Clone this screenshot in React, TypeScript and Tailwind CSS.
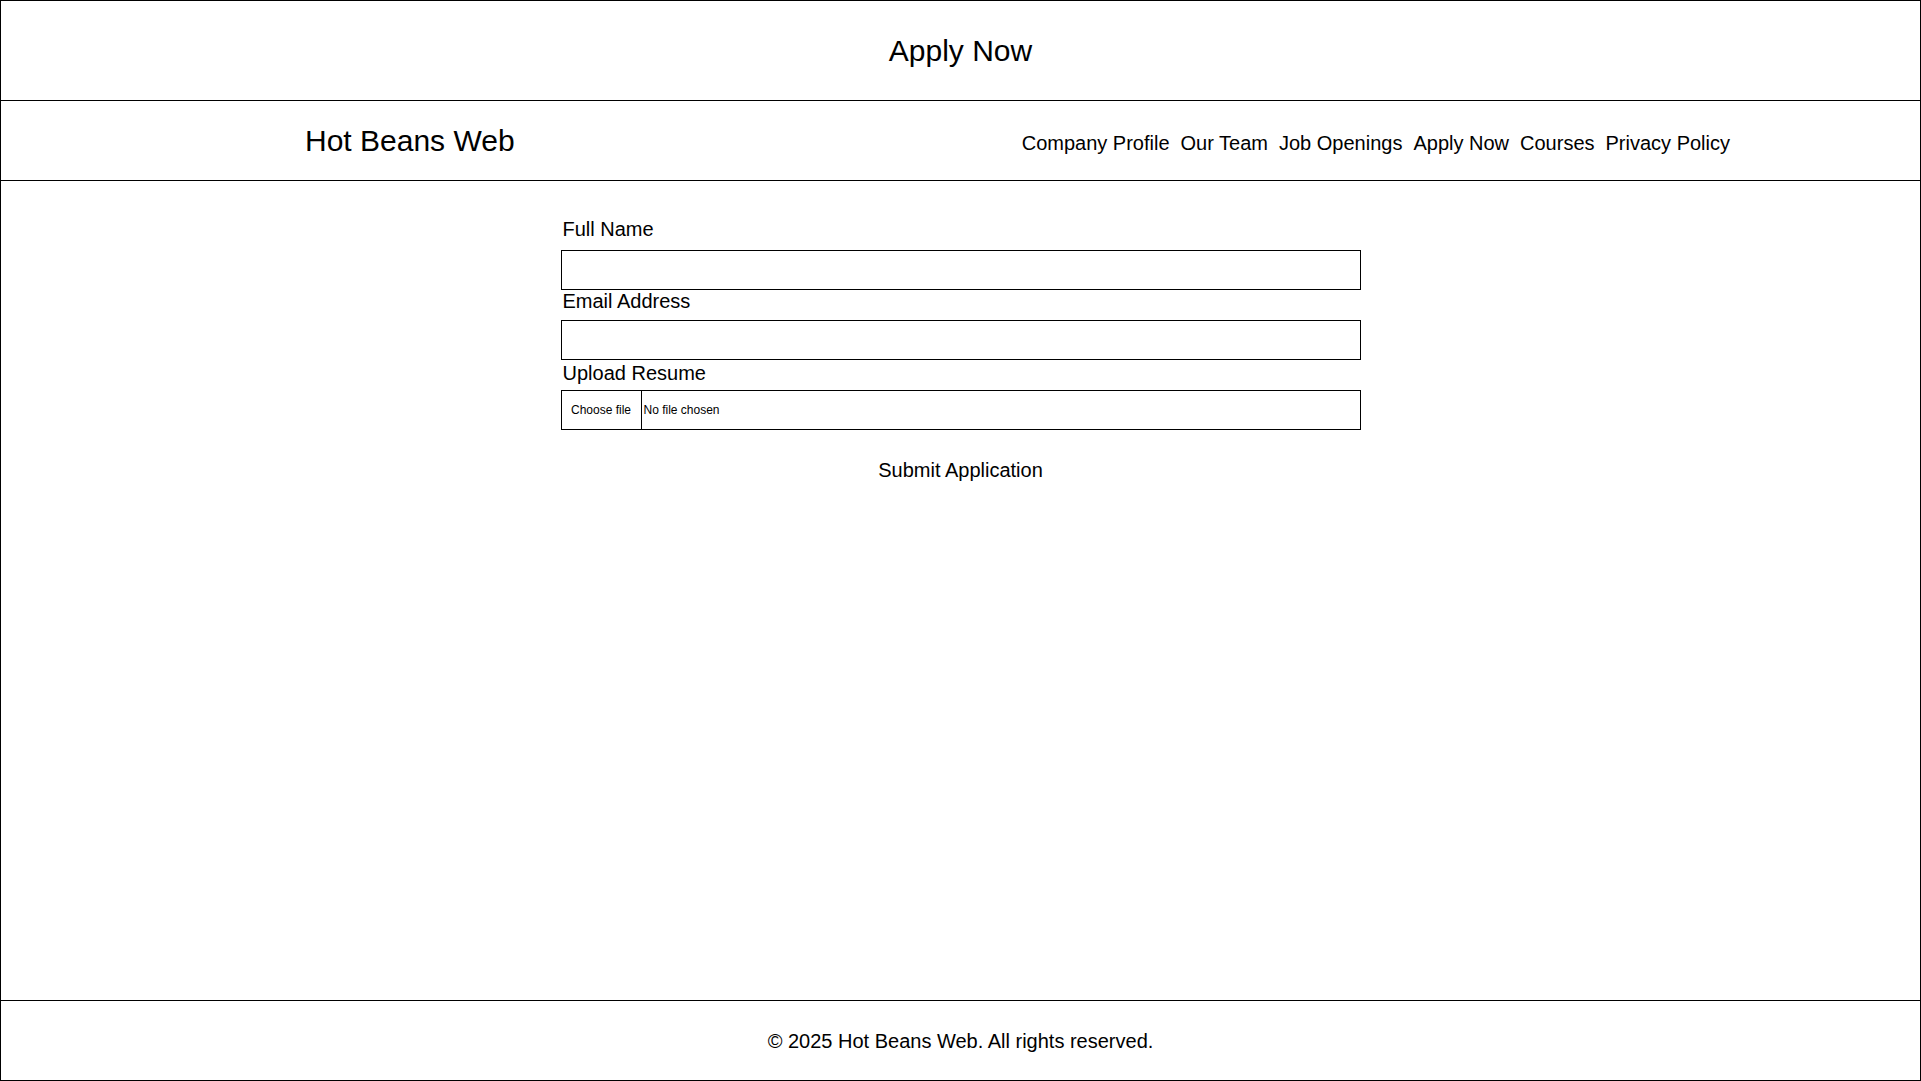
import React, { useState } from "react";

const navLinks = [
  "Company Profile",
  "Our Team",
  "Job Openings",
  "Apply Now",
  "Courses",
  "Privacy Policy",
];

export default function App() {
  const [fileName, setFileName] = useState("");

  return (
    <div
      className="flex h-[1081px] w-full flex-col border border-black bg-white text-black"
      style={{ fontFamily: '"Liberation Sans", Arial, sans-serif' }}
    >
      {/* Page title */}
      <header className="flex h-[100px] shrink-0 items-center justify-center border-b border-black">
        <h1 className="text-[30px] leading-none">Apply Now</h1>
      </header>

      {/* Nav bar */}
      <nav className="flex h-[80px] shrink-0 items-center justify-between border-b border-black pl-[304px] pr-[190px]">
        <div className="text-[30px] leading-none">Hot Beans Web</div>
        <ul className="flex items-center gap-[11px] pt-[4px] text-[20px] leading-none">
          {navLinks.map((link) => (
            <li key={link}>
              <a href="#">{link}</a>
            </li>
          ))}
        </ul>
      </nav>

      {/* Form */}
      <main className="flex-1">
        <form
          className="mx-auto flex w-[800px] flex-col pt-[37px]"
          onSubmit={(e) => e.preventDefault()}
        >
          <label htmlFor="name" className="mb-[9px] pl-[2px] text-[20px] leading-[23px]">
            Full Name
          </label>
          <input id="name" type="text" className="h-[40px] w-full border border-black px-2 text-[16px]" />

          <label htmlFor="email" className="mb-[7px] pl-[2px] text-[20px] leading-[23px]">
            Email Address
          </label>
          <input id="email" type="email" className="h-[40px] w-full border border-black px-2 text-[16px]" />

          <label className="mt-[2px] mb-[5px] pl-[2px] text-[20px] leading-[23px]">Upload Resume</label>
          <label className="flex h-[40px] w-full cursor-pointer items-stretch border border-black text-[12px]">
            <input
              type="file"
              className="hidden"
              onChange={(e) => setFileName(e.target.files?.[0]?.name ?? "")}
            />
            <span className="flex w-[80px] items-center justify-center border-r border-black">
              Choose file
            </span>
            <span className="flex items-center pl-[2px]">{fileName || "No file chosen"}</span>
          </label>

          <button type="submit" className="mx-auto mt-[29px] text-[20px] leading-[23px]">
            Submit Application
          </button>
        </form>
      </main>

      {/* Footer */}
      <footer className="flex h-[80px] shrink-0 items-center justify-center border-t border-black">
        <p className="text-[20px] leading-none">© 2025 Hot Beans Web. All rights reserved.</p>
      </footer>
    </div>
  );
}
